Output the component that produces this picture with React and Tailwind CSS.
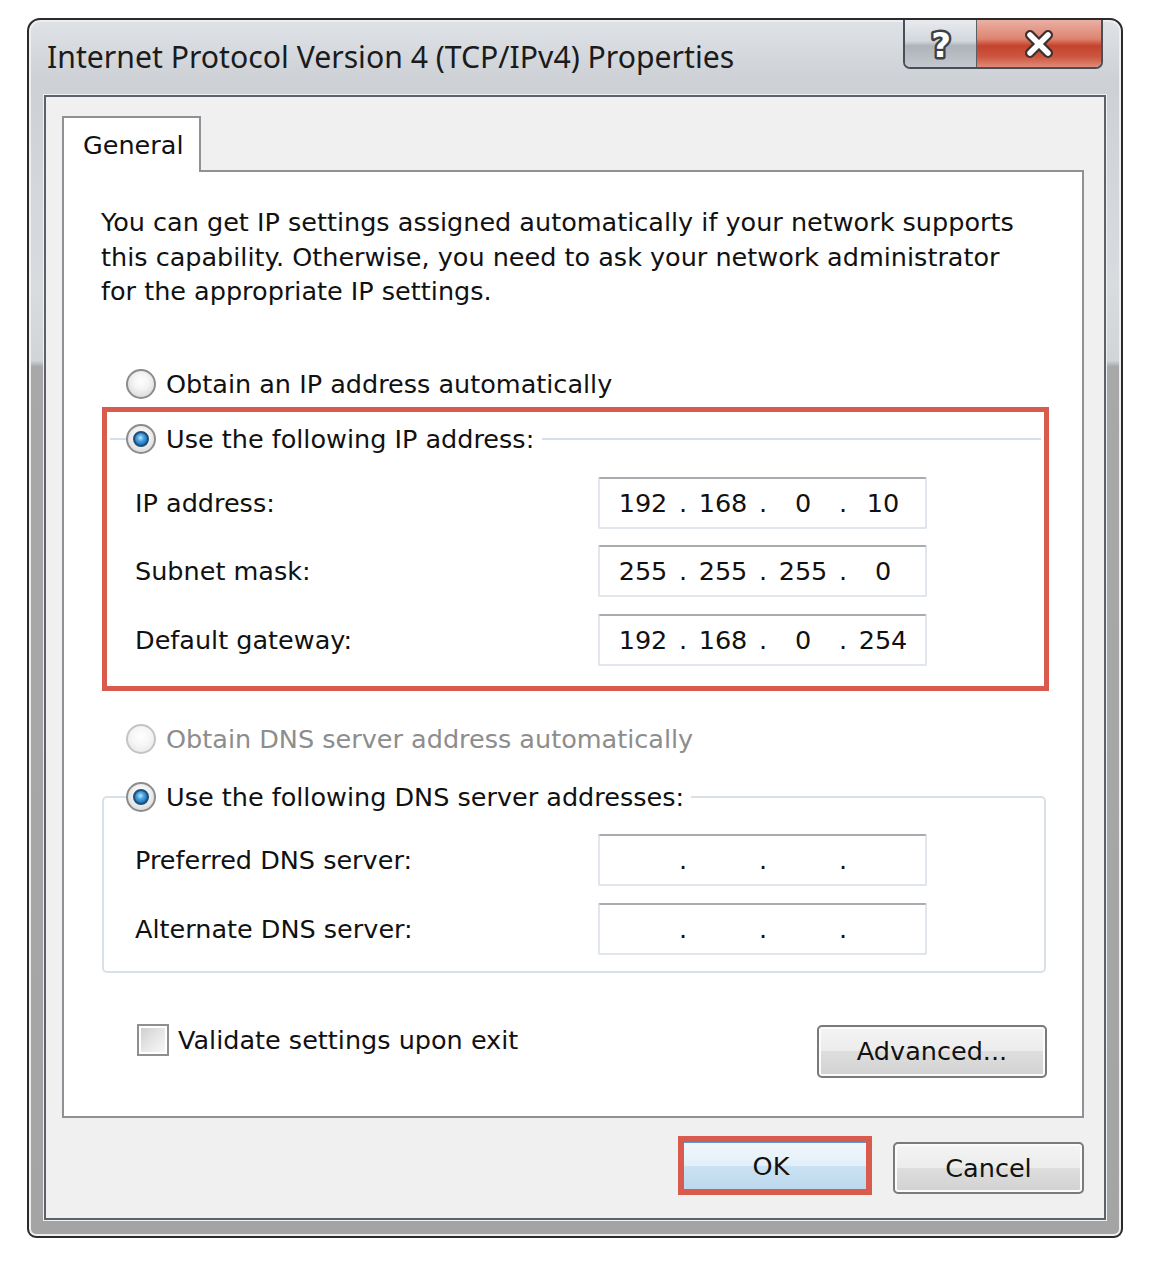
import React from "react";

const BODY = "font-['DejaVu_Sans',sans-serif]";

function Radio({ checked, disabled }) {
  return (
    <span
      className={
        "flex h-[30px] w-[30px] shrink-0 items-center justify-center rounded-full border-2 " +
        (disabled
          ? "border-[#c4c4c4] bg-[radial-gradient(circle_at_50%_40%,#ffffff_0%,#f6f6f6_45%,#e2e2e2_100%)]"
          : "border-[#8c8c8c] bg-[radial-gradient(circle_at_50%_40%,#ffffff_0%,#f3f3f3_40%,#cfcfcf_100%)]")
      }
    >
      {checked && (
        <span className="h-[16px] w-[16px] rounded-full border-2 border-[#1d4f7a] bg-[radial-gradient(circle_at_45%_40%,#bfe6ff_0%,#4aa2e2_35%,#1f6fb0_75%,#17507f_100%)]" />
      )}
    </span>
  );
}

function Checkbox() {
  return (
    <span className="flex h-[32px] w-[32px] shrink-0 items-center justify-center border-2 border-[#8e8f8f] bg-white p-[2px]">
      <span className="h-full w-full bg-[linear-gradient(135deg,#cfcfcf_0%,#e6e6e6_50%,#f7f7f7_100%)]" />
    </span>
  );
}

function IpField({ octets }) {
  const parts = octets || ["", "", "", ""];
  return (
    <div className="flex h-[52px] w-[329px] items-center rounded-[2px] border-2 border-[#e1e6ec] border-t-[#a9abb1] bg-white pl-[9px]">
      {parts.map((p, i) => (
        <React.Fragment key={i}>
          <span className="w-[68px] text-center">{p}</span>
          {i < 3 && <span className="w-[12px] text-center">.</span>}
        </React.Fragment>
      ))}
    </div>
  );
}

function FieldRow({ label, octets, className }) {
  return (
    <div className={"flex items-center " + (className || "")}>
      <span className="w-[463px] shrink-0">{label}</span>
      <IpField octets={octets} />
    </div>
  );
}

export default function App() {
  return (
    <div className={"h-[1264px] w-[1152px] overflow-hidden bg-white pt-[18px] text-[25.5px] leading-[34px] text-[#111111] " + BODY}>
      {/* Window */}
      <div className="ml-[27px] flex h-[1220px] w-[1096px] flex-col rounded-t-[13px] rounded-b-[9px] border-2 border-[#2b2b2b] bg-[linear-gradient(to_bottom,#dfe2e6_0%,#cdd1d6_5%,#d9dcdf_22%,#d2d5d8_28%,#a8a8a8_28.5%,#a4a4a4_100%)] shadow-[inset_0_0_0_2px_#eceef0]">
        {/* Title bar */}
        <div className="flex h-[75px] shrink-0 items-start justify-between">
          <div className="pl-[18px] pt-[17px] font-['Noto_Sans',sans-serif] text-[30.2px] leading-[40px] text-[#1b1b1b]">
            Internet Protocol Version 4 (TCP/IPv4) Properties
          </div>
          <div className="mr-[18px] flex h-[49px] overflow-hidden rounded-b-[7px] border-2 border-t-0 border-[#4a4f57]">
            <div className="flex w-[72px] items-center justify-center border-r border-[#5a5f66] bg-[linear-gradient(to_bottom,#e8eaee_0%,#d3d7dc_45%,#aeb3ba_55%,#c3c8ce_100%)]">
              <svg width="32" height="42" viewBox="0 0 32 42">
                <text
                  x="16"
                  y="34"
                  textAnchor="middle"
                  fontFamily="DejaVu Sans, sans-serif"
                  fontWeight="bold"
                  fontSize="34"
                  fill="#ffffff"
                  stroke="#3d4147"
                  strokeWidth="5"
                  strokeLinejoin="round"
                  paintOrder="stroke"
                >
                  ?
                </text>
              </svg>
            </div>
            <div className="flex w-[124px] items-center justify-center bg-[linear-gradient(to_bottom,#eab0a3_0%,#de8471_40%,#c4432c_55%,#cc5640_78%,#e18a76_100%)]">
              <svg width="36" height="30" viewBox="0 0 36 30">
                <path d="M9 6 L27 24 M27 6 L9 24" stroke="#3b3030" strokeWidth="10" strokeLinecap="round" fill="none" />
                <path d="M9 6 L27 24 M27 6 L9 24" stroke="#ffffff" strokeWidth="5.5" strokeLinecap="round" fill="none" />
              </svg>
            </div>
          </div>
        </div>

        {/* Client area */}
        <div className="mx-[15px] mb-[16px] flex flex-1 flex-col border-2 border-[#5d6268] bg-[#f0f0f0] shadow-[0_0_0_1px_#eef0f2]">
          <div className="ml-[16px] mr-[20px] mt-[19px]">
            {/* Tab header */}
            <div className="relative z-10 -mb-[2px] flex h-[56px] w-[139px] items-center border-2 border-b-0 border-[#8e9196] bg-white pl-[19px]">
              General
            </div>
            {/* Tab panel */}
            <div className="border-2 border-[#8e9196] bg-white pb-[38px]">
              <div className="ml-[37px] mt-[33px] leading-[34.5px]">
                <div className="whitespace-nowrap">You can get IP settings assigned automatically if your network supports</div>
                <div className="whitespace-nowrap">this capability. Otherwise, you need to ask your network administrator</div>
                <div className="whitespace-nowrap">for the appropriate IP settings.</div>
              </div>

              <div className="ml-[62px] mt-[58px] flex h-[34px] items-center">
                <Radio />
                <span className="ml-[10px]">Obtain an IP address automatically</span>
              </div>

              {/* Highlighted IP group */}
              <div className="ml-[38px] mt-[6px] w-[947px] border-[5px] border-[#d95b4e] pb-[20px] pt-[10px]">
                <fieldset className="mx-[3px] border-0 border-t-2 border-[#d5dfe5]">
                  <legend className="ml-[16px] pr-[8px]">
                    <span className="flex h-[34px] items-center">
                      <Radio checked />
                      <span className="ml-[10px]">Use the following IP address:</span>
                    </span>
                  </legend>
                  <div className="pl-[25px]">
                    <FieldRow className="mt-[21px]" label="IP address:" octets={["192", "168", "0", "10"]} />
                    <FieldRow className="mt-[16px]" label="Subnet mask:" octets={["255", "255", "255", "0"]} />
                    <FieldRow className="mt-[17px]" label="Default gateway:" octets={["192", "168", "0", "254"]} />
                  </div>
                </fieldset>
              </div>

              <div className="ml-[62px] mt-[31px] flex h-[34px] items-center text-[#8d8d8d]">
                <Radio disabled />
                <span className="ml-[10px]">Obtain DNS server address automatically</span>
              </div>

              <fieldset className="ml-[38px] mt-[24px] w-[944px] rounded-[5px] border-2 border-[#d9e1e7] pb-[16px]">
                <legend className="ml-[22px] pr-[7px]">
                  <span className="flex h-[34px] items-center">
                    <Radio checked />
                    <span className="ml-[10px]">Use the following DNS server addresses:</span>
                  </span>
                </legend>
                <div className="pl-[31px]">
                  <FieldRow className="mt-[20px]" label="Preferred DNS server:" />
                  <FieldRow className="mt-[17px]" label="Alternate DNS server:" />
                </div>
              </fieldset>

              <div className="mt-[51px] flex items-start justify-between">
                <div className="ml-[73px] flex h-[32px] items-center">
                  <Checkbox />
                  <span className="ml-[9px]">Validate settings upon exit</span>
                </div>
                <div className="mr-[35px] mt-[1px] flex h-[53px] w-[230px] items-center justify-center rounded-[5px] border-2 border-[#7a7a7a] bg-[linear-gradient(to_bottom,#f4f4f4_0%,#ececec_50%,#dedede_50%,#d2d2d2_100%)] shadow-[inset_0_0_0_2px_#fbfbfb]">
                  Advanced...
                </div>
              </div>
            </div>
          </div>

          {/* Dialog buttons */}
          <div className="mr-[20px] mt-[18px] flex items-start justify-end gap-[21px]">
            <div className="h-[59px] w-[194px] border-[6px] border-[#d95b4e]">
              <div className="flex h-full w-full items-center justify-center border-t border-[#5a9bd0] bg-[linear-gradient(to_bottom,#f1f7fc_0%,#e2eff9_50%,#cbe2f3_50%,#bcd8ed_100%)] pr-[8px]">
                OK
              </div>
            </div>
            <div className="mt-[6px] flex h-[52px] w-[191px] items-center justify-center rounded-[5px] border-2 border-[#7a7a7a] bg-[linear-gradient(to_bottom,#f4f4f4_0%,#ececec_50%,#dedede_50%,#d2d2d2_100%)] shadow-[inset_0_0_0_2px_#fbfbfb]">
              Cancel
            </div>
          </div>
        </div>
      </div>
    </div>
  );
}
